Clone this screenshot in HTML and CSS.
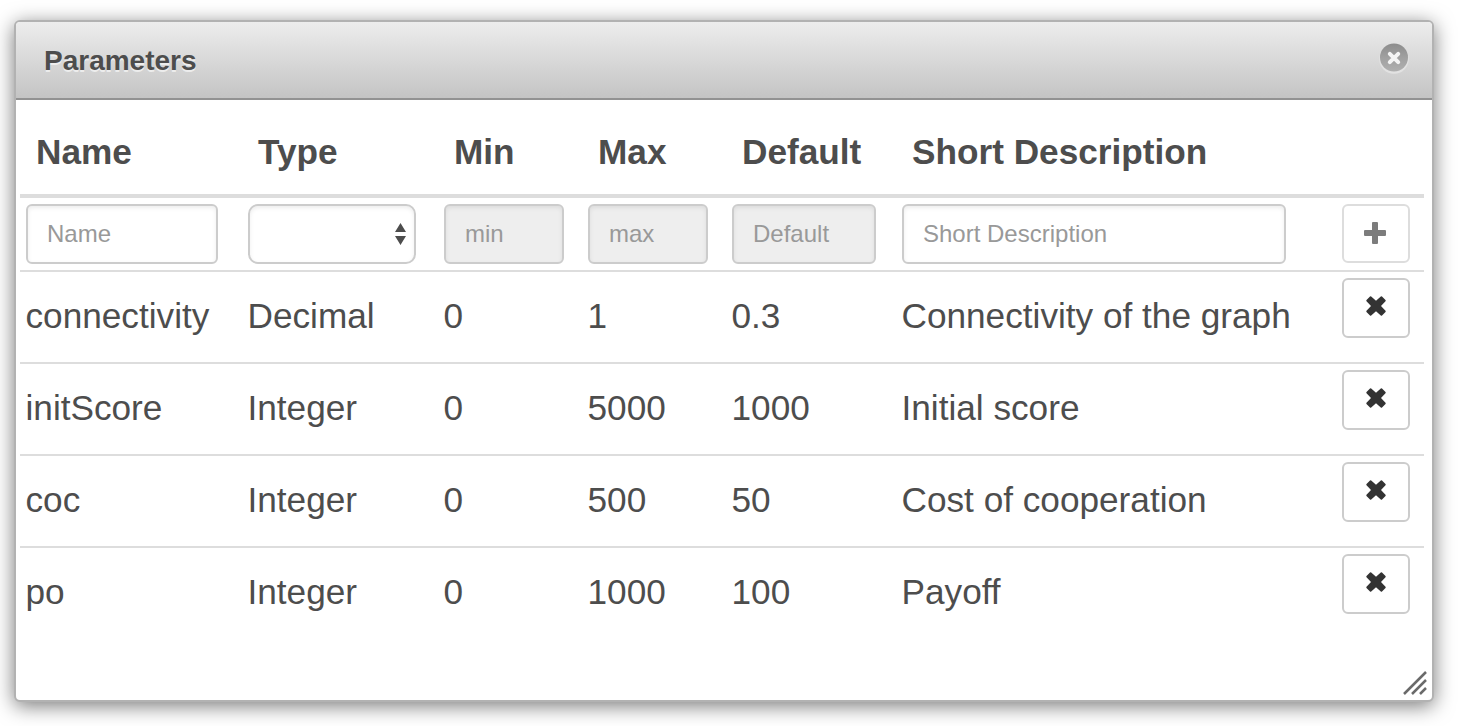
FILE: index.html
```
<!DOCTYPE html>
<html lang="en">
<head>
<meta charset="utf-8">
<title>Parameters</title>
<link rel="stylesheet" href="styles.css">
</head>
<body>
<svg class="defs" aria-hidden="true">
  <symbol id="remove" viewBox="0 0 20 20"><path d="M5.200.5 10 4.800 14.800.5q.6-.5 1.200 0l3.500 3.500q.5.600 0 1.200L15 10l4.500 4.800q.5.600 0 1.200L16 19.500q-.6.500-1.200 0L10 15.200l-4.800 4.300q-.6.500-1.200 0L.5 16q-.5-.6 0-1.200L5 10 .5 5.200Q0 4.600.5 4L4 .5q.6-.5 1.200 0z"/></symbol>
</svg>
<section class="dialog">
  <header class="titlebar">
    <h1 class="title">Parameters</h1>
    <svg class="close" viewBox="0 0 32 34">
      <defs><linearGradient id="disc" x1="0" y1="0" x2="0" y2="1"><stop offset="0" stop-color="#8c8c8c"/><stop offset=".5" stop-color="#a0a0a0"/><stop offset="1" stop-color="#b0b0b0"/></linearGradient></defs>
      <circle cx="16" cy="17" r="14.800" fill="#e2e2e2"/>
      <circle cx="16" cy="15.500" r="14" fill="url(#disc)"/>
      <path d="M11.800 11.800 20.200 20.200M20.200 11.800 11.800 20.200" stroke="#f4f4f4" stroke-width="4" stroke-linecap="round"/>
    </svg>
  </header>
  <div class="content">
    <div class="row head">
      <span>Name</span><span>Type</span><span>Min</span><span>Max</span><span>Default</span><span>Short Description</span><span></span>
    </div>
    <div class="row entry">
      <div><input class="field name" placeholder="Name"></div>
      <div><div class="field select"><svg class="arrows" viewBox="0 0 11 22"><path d="M5.500 0 11 9H0zM0 13h11l-5.500 9z" fill="#4d4d4d"/></svg></div></div>
      <div><input class="field small" placeholder="min" disabled></div>
      <div><input class="field small" placeholder="max" disabled></div>
      <div><input class="field default" placeholder="Default" disabled></div>
      <div><input class="field description" placeholder="Short Description"></div>
      <div><button class="button add" disabled aria-label="Add"><svg class="plus" viewBox="0 0 22 22"><path d="M9 0h4q1 0 1 1v7h7q1 0 1 1v4q0 1-1 1h-7v7q0 1-1 1H9q-1 0-1-1v-7H1q-1 0-1-1V9q0-1 1-1h7V1q0-1 1-1z"/></svg></button></div>
    </div>
    <div class="row item"><span>connectivity</span><span>Decimal</span><span>0</span><span>1</span><span>0.3</span><span>Connectivity of the graph</span><div><button class="button" aria-label="Remove"><svg class="cross"><use href="#remove"/></svg></button></div></div>
    <div class="row item"><span>initScore</span><span>Integer</span><span>0</span><span>5000</span><span>1000</span><span>Initial score</span><div><button class="button" aria-label="Remove"><svg class="cross"><use href="#remove"/></svg></button></div></div>
    <div class="row item"><span>coc</span><span>Integer</span><span>0</span><span>500</span><span>50</span><span>Cost of cooperation</span><div><button class="button" aria-label="Remove"><svg class="cross"><use href="#remove"/></svg></button></div></div>
    <div class="row item"><span>po</span><span>Integer</span><span>0</span><span>1000</span><span>100</span><span>Payoff</span><div><button class="button" aria-label="Remove"><svg class="cross"><use href="#remove"/></svg></button></div></div>
  </div>
  <svg class="grip" viewBox="0 0 24 24"><path d="M1 23 23 1M9 23 23 9M17 23l6-6" stroke="#6a6a6a" stroke-width="2.500"/></svg>
</section>
</body>
</html>
```
FILE: styles.css
```
* { box-sizing: border-box; }
body {
  margin: 0;
  padding: 20px 26px 24px 14px;
  height: 726px;
  overflow: hidden;
  background: #fff;
  color: #4d4d4d;
  font-family: "Liberation Sans", Arial, sans-serif;
}
.defs { position: absolute; width: 0; height: 0; }
.dialog {
  position: relative;
  height: 682px;
  border: 2px solid #b2b2b2;
  border-radius: 6px;
  background: #fff;
  box-shadow: 0 4px 20px rgba(0, 0, 0, .53);
}
.titlebar {
  display: flex;
  justify-content: space-between;
  height: 78px;
  padding: 20px 22px 0 28px;
  border-bottom: 2px solid #929292;
  border-radius: 4px 4px 0 0;
  background: linear-gradient(#ededed, #c4c4c4);
}
.title {
  margin: 0;
  font-size: 28px;
  line-height: 38px;
  text-shadow: 0 2px 0 rgba(255, 255, 255, .6);
}
.close { width: 32px; height: 34px; }
.content { padding: 0 8px 0 4px; }
.row {
  display: grid;
  grid-template-columns: 222px 196px 144px 144px 170px 440px 88px;
  border-top: 2px solid #ddd;
  font-size: 35.200px;
  white-space: nowrap;
}
.row > * { padding-left: 6px; }
.head {
  height: 94px;
  border-top: 0;
  font-weight: bold;
  line-height: 104px;
}
.head > * { padding-left: 16px; }
.entry {
  height: 76px;
  padding-top: 6px;
  border-top-width: 4px;
}
.item {
  height: 92px;
  padding-top: 6px;
  line-height: 76px;
}
.item > span { padding-left: 5.500px; }
.field {
  display: block;
  height: 60px;
  margin: 0;
  padding: 0 19px;
  border: 2px solid #ccc;
  border-radius: 6px;
  background: #fff;
  box-shadow: inset 0 2px 4px rgba(0, 0, 0, .075);
  font: 24px "Liberation Sans", Arial, sans-serif;
}
.field::placeholder { color: #999; opacity: 1; }
.field:disabled { background: #eee; }
.name { width: 192px; }
.select {
  display: flex;
  align-items: center;
  justify-content: flex-end;
  width: 168px;
  padding: 0 8px;
  border-radius: 10px;
}
.arrows { width: 11px; height: 22px; }
.small { width: 120px; }
.default { width: 144px; }
.description { width: 384px; }
.button {
  display: flex;
  justify-content: center;
  width: 68px;
  height: 60px;
  padding: 16px 0 0;
  border: 2px solid #ccc;
  border-radius: 6px;
  background: #fff;
  fill: #333;
}
.add { height: 59px; border-color: #ddd; fill: #7c7c7c; }
.plus { width: 22px; height: 22px; margin-left: -3px; }
.cross { width: 20px; height: 20px; margin-left: -1px; }
.grip {
  position: absolute;
  right: 5px;
  bottom: 5px;
  width: 24px;
  height: 24px;
}
```
